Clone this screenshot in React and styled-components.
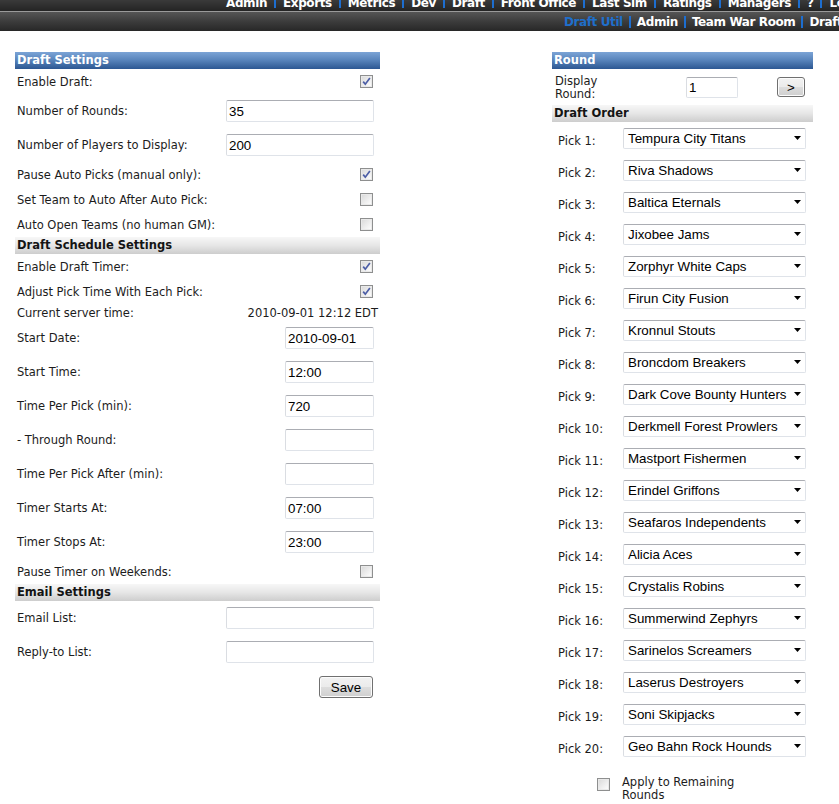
import React from 'react';
import styled, { createGlobalStyle } from 'styled-components';

const GlobalStyle = createGlobalStyle`
  html, body { margin: 0; padding: 0; background: #fff; }
  body {
    font-family: "DejaVu Sans", Verdana, sans-serif;
    font-size: 11.5px;
    color: #1c1c1c;
    overflow: hidden;
  }
  * { box-sizing: border-box; }
`;

const NavBar = styled.div`
  height: ${(p) => p.$h}px;
  background: ${(p) => p.$bg};
  overflow: hidden;
  white-space: nowrap;
  display: flex;
  align-items: ${(p) => (p.$top ? 'flex-start' : 'center')};
  padding-left: ${(p) => p.$start}px;
`;

const NavLine = styled.div`
  height: 1px;
  background: #9a9a9a;
`;

const NavLink = styled.span`
  font-family: "DejaVu Sans", Verdana, sans-serif;
  font-weight: bold;
  font-size: 12px;
  letter-spacing: -0.4px;
  line-height: 14px;
  color: ${(p) => (p.$active ? '#1f6fcb' : '#ffffff')};
  margin-top: ${(p) => p.$shift || 0}px;
  flex: none;
`;

const NavSep = styled.span`
  width: 2px;
  height: 12px;
  background: #1d6ed0;
  margin: ${(p) => p.$shift || 0}px ${(p) => p.$gap}px 0;
  flex: none;
`;

const Main = styled.div`
  display: flex;
  align-items: flex-start;
  padding: 21px 0 0 15px;
`;

const Panel = styled.div`
  width: ${(p) => p.$w}px;
  margin-left: ${(p) => p.$ml || 0}px;
  flex: none;
`;

const SectionHeader = styled.div`
  height: 17px;
  line-height: 17px;
  padding-left: 2px;
  font-weight: bold;
  font-size: 11.5px;
  color: ${(p) => (p.$blue ? '#ffffff' : '#141414')};
  background: ${(p) =>
    p.$blue
      ? 'linear-gradient(#7ca4d6, #5a86bd 45%, #2c5792)'
      : 'linear-gradient(#f7f7f7, #e6e6e6 50%, #cdcdcd)'};
`;

const Row = styled.div`
  height: ${(p) => p.$h}px;
  display: flex;
  align-items: center;
  justify-content: space-between;
  padding-left: 2px;
`;

const Label = styled.span`
  line-height: 14px;
`;

const Value = styled.span`
  line-height: 14px;
  padding-right: 2px;
`;

const CheckBox = styled.span`
  width: 13px;
  height: 13px;
  border: 1px solid #8e8f8f;
  background: linear-gradient(135deg, #d8d8d8, #f4f4f4 70%, #ffffff);
  display: inline-flex;
  align-items: center;
  justify-content: center;
  margin-right: ${(p) => p.$mr || 0}px;
  margin-top: ${(p) => p.$mt || 0}px;
  flex: none;
  box-shadow: inset 0 0 0 1px #e9e9e9;
`;

const TextInput = styled.input`
  width: ${(p) => p.$w}px;
  height: ${(p) => p.$h || 22}px;
  margin: 0 ${(p) => p.$mr || 0}px 0 0;
  padding: 0 2px;
  border: 1px solid #dfe3e9;
  border-top-color: #abadb3;
  border-left-color: #dadde2;
  border-radius: 2px;
  font-family: "Liberation Sans", Arial, sans-serif;
  font-size: 13.33px;
  color: #000;
  background: #fff;
  outline: none;
`;

const Button = styled.button`
  width: ${(p) => p.$w}px;
  height: ${(p) => p.$h}px;
  margin: 0 ${(p) => p.$mr || 0}px 0 ${(p) => (p.$auto ? 'auto' : '0')};
  padding: 0;
  border: 1px solid #707070;
  border-radius: 3px;
  background: linear-gradient(#f2f2f2, #ebebeb 50%, #dddddd 51%, #cfcfcf);
  font-family: "Liberation Sans", Arial, sans-serif;
  font-size: 13.33px;
  color: #000;
  box-shadow: inset 0 0 0 1px #fcfcfc;
`;

const ButtonRow = styled.div`
  display: flex;
  justify-content: flex-end;
  padding: 7px 7px 0 0;
`;

const DisplayRow = styled.div`
  height: 36px;
  display: flex;
  align-items: center;
`;

const DisplayLabel = styled.div`
  width: 134px;
  padding-left: 3px;
  padding-top: 2px;
  flex: none;
`;

const WrapText = styled.div`
  width: ${(p) => p.$w}px;
  line-height: 13px;
`;

const PickRow = styled.div`
  height: 32px;
  display: flex;
  align-items: center;
`;

const PickLabel = styled.div`
  width: 71px;
  padding-left: 6px;
  padding-top: 5px;
  flex: none;
`;

const Select = styled.div`
  width: 183px;
  height: 21px;
  border: 1px solid #dfe3e9;
  border-top-color: #abadb3;
  border-left-color: #dadde2;
  border-radius: 2px;
  display: flex;
  align-items: center;
  justify-content: space-between;
  padding: 0 4px 0 4px;
  font-family: "Liberation Sans", Arial, sans-serif;
  font-size: 13.33px;
  color: #000;
  white-space: nowrap;
`;

const ApplyRow = styled.div`
  display: flex;
  align-items: flex-start;
  padding: 14px 0 0 45px;
`;

const ApplyText = styled(WrapText)`
  margin-left: 12px;
`;

const Check = ({ checked, mr, mt }) => (
  <CheckBox $mr={mr} $mt={mt}>
    {checked && (
      <svg width="11" height="11" viewBox="0 0 11 11">
        <path d="M2.2 5.6 L4.3 8.2 L8.9 1.9" fill="none" stroke="#4c5ea6" strokeWidth="1.7" />
      </svg>
    )}
  </CheckBox>
);

const Arrow = () => (
  <svg width="7" height="4" viewBox="0 0 7 4">
    <polygon points="0,0 7,0 3.5,4" fill="#000" />
  </svg>
);

const topItems = ['Admin', 'Exports', 'Metrics', 'Dev', 'Draft', 'Front Office', 'Last Sim', 'Ratings', 'Managers', '?', 'Logout'];
const subItems = [
  { t: 'Draft Util', active: true },
  { t: 'Admin' },
  { t: 'Team War Room' },
  { t: 'Draft Room' },
];

const teams = [
  'Tempura City Titans',
  'Riva Shadows',
  'Baltica Eternals',
  'Jixobee Jams',
  'Zorphyr White Caps',
  'Firun City Fusion',
  'Kronnul Stouts',
  'Broncdom Breakers',
  'Dark Cove Bounty Hunters',
  'Derkmell Forest Prowlers',
  'Mastport Fishermen',
  'Erindel Griffons',
  'Seafaros Independents',
  'Alicia Aces',
  'Crystalis Robins',
  'Summerwind Zephyrs',
  'Sarinelos Screamers',
  'Laserus Destroyers',
  'Soni Skipjacks',
  'Geo Bahn Rock Hounds',
];

const CheckRow = ({ label, checked }) => (
  <Row $h={25}>
    <Label>{label}</Label>
    <Check checked={checked} mr={7} />
  </Row>
);

const InputRow = ({ label, value, w }) => (
  <Row $h={34}>
    <Label>{label}</Label>
    <TextInput $w={w} $mr={6} defaultValue={value} />
  </Row>
);

export default function App() {
  return (
    <>
      <GlobalStyle />
      <NavBar $h={11} $top $start={226} $bg="linear-gradient(#3a3a3a, #242424)">
        {topItems.map((t, i) => (
          <React.Fragment key={t}>
            {i > 0 && <NavSep $gap={7} $shift={-4} />}
            <NavLink $shift={-4}>{t}</NavLink>
          </React.Fragment>
        ))}
      </NavBar>
      <NavLine />
      <NavBar $h={19} $start={564} $bg="linear-gradient(#555555, #3c3c3c 50%, #272727)">
        {subItems.map((it, i) => (
          <React.Fragment key={it.t}>
            {i > 0 && <NavSep $gap={6} />}
            <NavLink $active={it.active}>{it.t}</NavLink>
          </React.Fragment>
        ))}
      </NavBar>
      <Main>
        <Panel $w={365}>
          <SectionHeader $blue>Draft Settings</SectionHeader>
          <CheckRow label="Enable Draft:" checked />
          <InputRow label="Number of Rounds:" value="35" w={148} />
          <InputRow label="Number of Players to Display:" value="200" w={148} />
          <CheckRow label="Pause Auto Picks (manual only):" checked />
          <CheckRow label="Set Team to Auto After Auto Pick:" />
          <CheckRow label="Auto Open Teams (no human GM):" />
          <SectionHeader>Draft Schedule Settings</SectionHeader>
          <CheckRow label="Enable Draft Timer:" checked />
          <CheckRow label="Adjust Pick Time With Each Pick:" checked />
          <Row $h={17}>
            <Label>Current server time:</Label>
            <Value>2010-09-01 12:12 EDT</Value>
          </Row>
          <InputRow label="Start Date:" value="2010-09-01" w={89} />
          <InputRow label="Start Time:" value="12:00" w={89} />
          <InputRow label="Time Per Pick (min):" value="720" w={89} />
          <InputRow label="- Through Round:" value="" w={89} />
          <InputRow label="Time Per Pick After (min):" value="" w={89} />
          <InputRow label="Timer Starts At:" value="07:00" w={89} />
          <InputRow label="Timer Stops At:" value="23:00" w={89} />
          <CheckRow label="Pause Timer on Weekends:" />
          <SectionHeader>Email Settings</SectionHeader>
          <InputRow label="Email List:" value="" w={148} />
          <InputRow label="Reply-to List:" value="" w={148} />
          <ButtonRow>
            <Button $w={54} $h={22}>Save</Button>
          </ButtonRow>
        </Panel>
        <Panel $w={261} $ml={172}>
          <SectionHeader $blue>Round</SectionHeader>
          <DisplayRow>
            <DisplayLabel>
              <WrapText $w={60}>Display Round:</WrapText>
            </DisplayLabel>
            <TextInput $w={52} $h={21} defaultValue="1" />
            <Button $w={28} $h={20} $auto $mr={8}>&gt;</Button>
          </DisplayRow>
          <SectionHeader>Draft Order</SectionHeader>
          {teams.map((t, i) => (
            <PickRow key={t}>
              <PickLabel>Pick {i + 1}:</PickLabel>
              <Select>
                <span>{t}</span>
                <Arrow />
              </Select>
            </PickRow>
          ))}
          <ApplyRow>
            <Check mt={2} />
            <ApplyText $w={140}>Apply to Remaining Rounds</ApplyText>
          </ApplyRow>
        </Panel>
      </Main>
    </>
  );
}
